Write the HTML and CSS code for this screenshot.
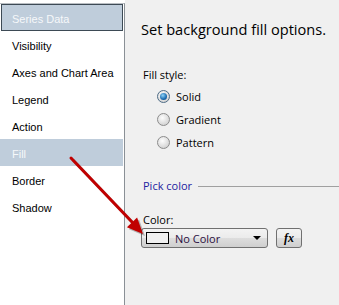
FILE: index.html
```html
<!DOCTYPE html>
<html lang="en">
<head>
    <meta charset="UTF-8">
    <title>Series Properties - Fill</title>
    <link rel="stylesheet" href="styles.css">
</head>
<body>
<div class="dialog">
    <div class="sidebar">
        <ul class="nav">
            <li class="item selected focused">Series Data</li>
            <li class="item">Visibility</li>
            <li class="item">Axes and Chart Area</li>
            <li class="item">Legend</li>
            <li class="item">Action</li>
            <li class="item selected">Fill</li>
            <li class="item">Border</li>
            <li class="item">Shadow</li>
        </ul>
    </div>
    <div class="content">
        <h1 class="title">Set background fill options.</h1>
        <div class="label">Fill style:</div>
        <div class="radios">
            <div class="radio-row"><span class="radio checked"></span>Solid</div>
            <div class="radio-row"><span class="radio"></span>Gradient</div>
            <div class="radio-row"><span class="radio"></span>Pattern</div>
        </div>
        <div class="group-title"><span>Pick color</span><span class="rule"></span></div>
        <div class="label color-label">Color:</div>
        <div class="picker">
            <div class="combo">
                <span class="swatch"></span>
                <span class="combo-text">No Color</span>
                <span class="caret"></span>
            </div>
            <button class="fx-btn" type="button"><i>fx</i></button>
        </div>
    </div>
</div>
<svg class="arrow" width="339" height="305" viewBox="0 0 339 305">
    <g opacity="0.25" transform="translate(2,2)">
        <line x1="71" y1="158" x2="132" y2="222" stroke="#000" stroke-width="3"/>
        <polygon points="143,234 126.9,227.2 137.1,217.6" fill="#000"/>
    </g>
    <line x1="71" y1="158" x2="132" y2="222" stroke="#c00000" stroke-width="3" stroke-linecap="round"/>
    <polygon points="143,234 126.9,227.2 137.1,217.6" fill="#c00000"/>
</svg>
</body>
</html>
```

FILE: styles.css
```css
body { margin: 0; width: 339px; height: 305px; overflow: hidden; background: #f0f0f0; position: relative; }
.dialog { display: flex; height: 305px; }

.sidebar { width: 125px; background: #fff; padding-top: 3px; box-sizing: border-box; }
.nav { list-style: none; margin: 0; padding: 0; height: 100%; border-top: 1px solid #b9bec3; border-right: 1px solid #8a9096; box-sizing: border-box; }
.item { font: 11px "Liberation Sans", Arial, sans-serif; height: 27px; padding: 3px 0 0 12px; line-height: 24px; margin-right: 1px; color: #000; box-sizing: border-box; }
.item.selected { background: #bfcddb; color: #f6f8fa; }
.item.focused { border: 1px solid #3d4a55; margin-left: 1px; padding-left: 10px; line-height: 22px; }

.content { flex: 1; padding: 19px 0 0 16px; font-family: "Open Sans", "Noto Sans", sans-serif; color: #000; }
.title { margin: 0 0 28px; font-size: 14.6px; font-weight: normal; line-height: 20px; }
.label { font-size: 11px; line-height: 16px; padding-left: 2px; }
.radios { padding: 2px 0 0 16px; }
.radio-row { display: flex; align-items: center; gap: 6px; height: 23px; font-size: 11px; }
.radio { width: 11px; height: 11px; border-radius: 50%; border: 1px solid #8c8c8c; background: radial-gradient(circle at 40% 35%, #fdfdfd, #d4d4d4 75%); box-sizing: content-box; position: relative; }
.radio.checked { border-color: #4e6c86; }
.radio.checked::after { content: ""; position: absolute; left: 2px; top: 2px; width: 7px; height: 7px; border-radius: 50%; background: radial-gradient(circle at 40% 35%, #8fd3f7, #1a6bb0 60%, #0b3f74); }

.group-title { display: flex; align-items: center; gap: 6px; margin-top: 24px; padding-left: 2px; font-size: 11px; line-height: 16px; color: #2222a0; }
.rule { flex: 1; height: 1px; background: #a0a0a0; }

.color-label { margin-top: 18px; }
.picker { display: flex; gap: 8px; margin-top: 0; }
.combo { width: 127px; height: 20px; box-sizing: border-box; border: 1px solid #707070; border-radius: 3px; background: linear-gradient(#f3f3f3, #ebebeb 50%, #dddddd 51%, #cfcfcf); display: flex; align-items: center; padding-left: 4px; }
.swatch { width: 21px; height: 10px; border: 1px solid #000; background: #f0f0f0; }
.combo-text { flex: 1; margin-left: 6px; font-size: 11px; color: #2a0e3e; }
.caret { width: 0; height: 0; border-left: 4px solid transparent; border-right: 4px solid transparent; border-top: 4px solid #000; margin-right: 6px; }
.fx-btn { width: 26px; height: 20px; padding: 0; border: 1px solid #707070; border-radius: 3px; background: linear-gradient(#f3f3f3, #ebebeb 50%, #dddddd 51%, #cfcfcf); font: bold 12px "Liberation Serif", "Times New Roman", serif; color: #000; }

.arrow { position: absolute; left: 0; top: 0; pointer-events: none; }
```
